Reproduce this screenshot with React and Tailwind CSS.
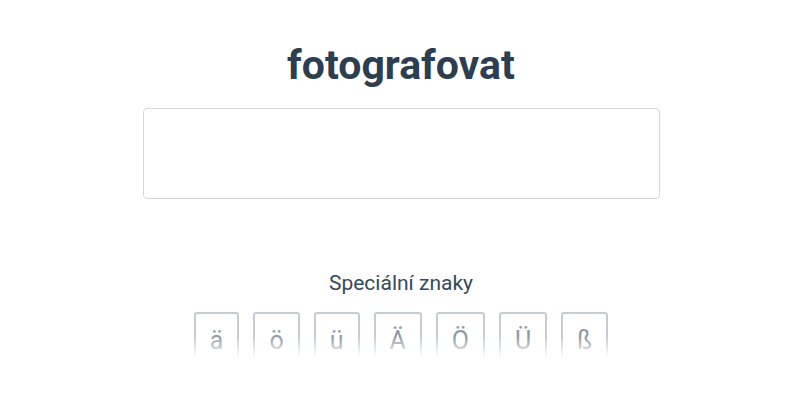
import React from "react";

const keys = ["ä", "ö", "ü", "Ä", "Ö", "Ü", "ß"];

export default function App() {
  return (
    <div className="w-[800px] h-[400px] bg-white flex flex-col items-center overflow-hidden" style={{ fontFamily: "Roboto, sans-serif" }}>
      <h1 className="mt-[37px] ml-[2px] text-[41px] leading-[57px] font-bold text-[#2c3e50]">fotografovat</h1>
      <div className="mt-[14px] ml-[2px] w-[517px] h-[91px] border border-[#d6d6d6] rounded-[4px]"></div>
      <div className="mt-[70px] ml-[2px] text-[21px] leading-[28px] text-[#34495e]">Speciální znaky</div>
      <div className="relative mt-[15px] ml-[2px] flex gap-[14px] h-[46px] overflow-hidden">
        {keys.map((k) => (
          <div key={k} className="min-w-[45px] h-[60px] px-[14px] border-2 border-[#c5ccd3] rounded-[3px] flex justify-center pt-[12px] text-[25px] leading-[30px] text-[#8d99a6]">
            {k}
          </div>
        ))}
        <div className="absolute inset-x-0 bottom-0 h-[22px] bg-gradient-to-b from-transparent to-white"></div>
      </div>
    </div>
  );
}
